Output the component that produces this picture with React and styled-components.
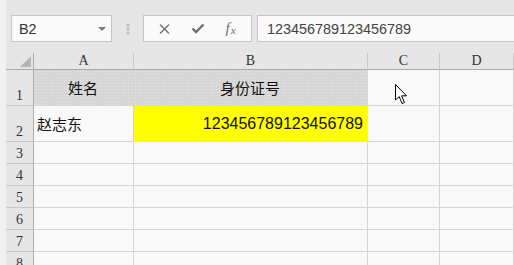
import React from "react";
import styled, { createGlobalStyle } from "styled-components";

const GlobalStyle = createGlobalStyle`
  html, body {
    margin: 0;
    padding: 0;
    background: #e6e6e6;
    overflow: hidden;
  }
  * {
    box-sizing: border-box;
  }
`;

const Page = styled.div`
  width: 514px;
  height: 265px;
  display: flex;
  position: relative;
  overflow: hidden;
  font-family: "Liberation Sans", "Noto Sans CJK SC", sans-serif;
`;

const LeftStrip = styled.div`
  width: 6px;
  flex: none;
  background: #f1f1f1;
`;

const Main = styled.div`
  flex: 1;
  display: flex;
  flex-direction: column;
  min-width: 0;
`;

const Toolbar = styled.div`
  height: 53px;
  flex: none;
  display: flex;
  align-items: flex-start;
  padding: 15px 0 0 5px;
  background: #e6e6e6;
`;

const Box = styled.div`
  height: 27px;
  display: flex;
  align-items: center;
  background: #fafafa;
  border: 1px solid #c6c6c6;
`;

const NameBox = styled(Box)`
  width: 101px;
  justify-content: space-between;
  padding: 0 5px 0 7px;
  font-size: 14.4px;
  color: #333;
`;

const Caret = styled.span`
  width: 0;
  height: 0;
  border-left: 4px solid transparent;
  border-right: 4px solid transparent;
  border-top: 4px solid #7a7a7a;
  margin-top: 1px;
`;

const Grip = styled.div`
  width: 31px;
  height: 27px;
  display: flex;
  flex-direction: column;
  align-items: center;
  justify-content: center;
  gap: 2px;
  span {
    width: 2px;
    height: 2px;
    background: #bdbdbd;
    box-shadow: 0 0 0 0.5px #c8c8c8;
  }
`;

const ButtonBox = styled(Box)`
  width: 109px;
  justify-content: space-around;
  padding: 0 4px;
  margin-right: 5px;
`;

const ToolButton = styled.span`
  width: 22px;
  display: flex;
  justify-content: center;
  align-items: center;
  color: #6e6e6e;
`;

const Fx = styled.span`
  font-family: "Liberation Serif", serif;
  font-style: italic;
  font-size: 15px;
  color: #6e6e6e;
  sub {
    font-size: 11px;
    vertical-align: -1px;
    margin-left: 1px;
  }
`;

const FormulaBox = styled(Box)`
  flex: 1;
  border-right: none;
  padding-left: 9px;
  font-size: 14.4px;
  color: #444;
`;

const Sheet = styled.div`
  flex: 1;
  display: grid;
  grid-template-columns: 28px 100px 234px 72px 1fr;
  grid-template-rows: 17px 36px 36px repeat(6, 22px);
  background: #f9f9f9;
`;

const Corner = styled.div`
  background: #e6e6e6;
  border-right: 1px solid #ababab;
  border-bottom: 1px solid #ababab;
  display: flex;
  justify-content: flex-end;
  align-items: flex-end;
  padding: 0 2px 2px 0;
  &::after {
    content: "";
    width: 11px;
    height: 11px;
    background: #b5b5b5;
    clip-path: polygon(100% 0, 100% 100%, 0 100%);
  }
`;

const ColHead = styled.div`
  background: #e6e6e6;
  border-right: 1px solid #c9c9c9;
  border-bottom: 1px solid #ababab;
  display: flex;
  justify-content: center;
  align-items: center;
  font-family: "Liberation Serif", serif;
  font-size: 14px;
  color: #333;
`;

const RowHead = styled.div`
  background: #e6e6e6;
  border-right: 1px solid #ababab;
  border-bottom: 1px solid #c9c9c9;
  display: flex;
  justify-content: center;
  align-items: flex-end;
  padding-bottom: 2px;
  font-family: "Liberation Serif", serif;
  font-size: 14px;
  line-height: 15px;
  color: #333;
`;

const fills = {
  pattern: `
    background-color: #d6d6d6;
    background-image: radial-gradient(circle, #e4e4e4 0.6px, transparent 0.8px);
    background-size: 3px 3px;
  `,
  yellow: `background: #ffff00;`,
};

const Cell = styled.div`
  border-right: 1px solid ${(p) => (p.$fill ? "transparent" : "#d4d4d4")};
  border-bottom: 1px solid ${(p) => (p.$fill ? "transparent" : "#d4d4d4")};
  ${(p) => (p.$fill ? fills[p.$fill] : "")}
  display: flex;
  align-items: center;
  justify-content: ${(p) =>
    p.$align === "center" ? "center" : p.$align === "right" ? "flex-end" : "flex-start"};
  padding: 0 4px 0 3px;
  font-family: ${(p) =>
    p.$num ? '"Liberation Sans", sans-serif' : '"Noto Sans CJK SC", sans-serif'};
  font-size: ${(p) => (p.$num ? "16px" : "15px")};
  color: #111;
  white-space: nowrap;
`;

const Cursor = styled.svg`
  position: absolute;
  left: 395px;
  top: 84px;
`;

const XIcon = () => (
  <svg width="11" height="10" viewBox="0 0 11 10">
    <path d="M1 0.5 L10 9.5 M10 0.5 L1 9.5" stroke="currentColor" strokeWidth="1.3" fill="none" />
  </svg>
);

const CheckIcon = () => (
  <svg width="14" height="11" viewBox="0 0 14 11">
    <path d="M1.5 5.5 L5 9 L12.5 1.5" stroke="currentColor" strokeWidth="2.4" fill="none" />
  </svg>
);

const columns = ["A", "B", "C", "D"];

const rows = [
  { n: 1, cells: [{ text: "姓名", align: "center", fill: "pattern" }, { text: "身份证号", align: "center", fill: "pattern" }, {}, {}] },
  { n: 2, cells: [{ text: "赵志东" }, { text: "123456789123456789", align: "right", fill: "yellow", num: true }, {}, {}] },
  ...[3, 4, 5, 6, 7, 8].map((n) => ({ n, cells: [{}, {}, {}, {}] })),
];

export default function App() {
  return (
    <>
      <GlobalStyle />
      <Page>
        <LeftStrip />
        <Main>
          <Toolbar>
            <NameBox>
              <span>B2</span>
              <Caret />
            </NameBox>
            <Grip>
              <span />
              <span />
              <span />
            </Grip>
            <ButtonBox>
              <ToolButton><XIcon /></ToolButton>
              <ToolButton><CheckIcon /></ToolButton>
              <ToolButton>
                <Fx>f<sub>x</sub></Fx>
              </ToolButton>
            </ButtonBox>
            <FormulaBox>123456789123456789</FormulaBox>
          </Toolbar>
          <Sheet>
            <Corner />
            {columns.map((c) => (
              <ColHead key={c}>{c}</ColHead>
            ))}
            {rows.map((r) => (
              <React.Fragment key={r.n}>
                <RowHead>{r.n}</RowHead>
                {r.cells.map((c, i) => (
                  <Cell key={i} $fill={c.fill} $align={c.align} $num={c.num}>
                    {c.text}
                  </Cell>
                ))}
              </React.Fragment>
            ))}
          </Sheet>
        </Main>
        <Cursor width="13" height="21" viewBox="0 0 13 21">
          <path
            d="M0.5 0.5 L0.5 16 L4.2 12.6 L7 19.5 L9.4 18.5 L6.7 11.8 L11.5 11.8 Z"
            fill="#fff"
            stroke="#000"
            strokeWidth="1"
            strokeLinejoin="miter"
          />
        </Cursor>
      </Page>
    </>
  );
}
